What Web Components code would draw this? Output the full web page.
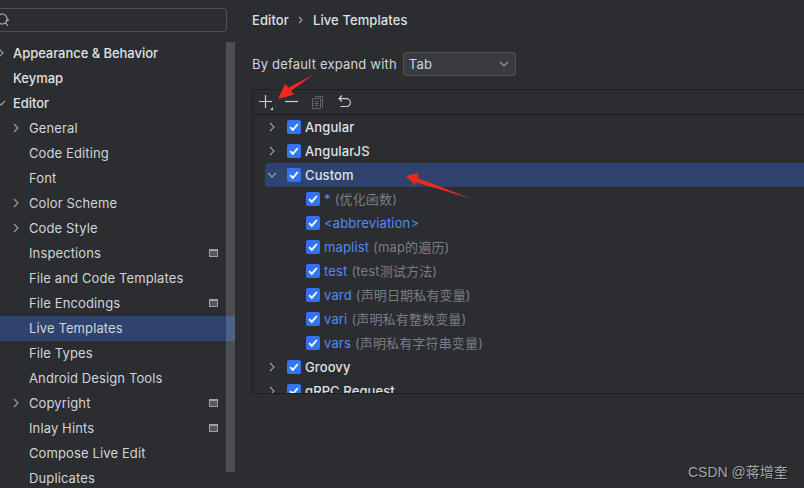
<!DOCTYPE html>
<html><head><meta charset="utf-8"><style>
html,body{margin:0;padding:0;background:#2b2d30;width:804px;height:488px;overflow:hidden}
body{font:13px Inter,"Noto Sans CJK SC",sans-serif;color:#dfe1e5}
</style></head><body>
<settings-app></settings-app>
<script>
const chev=(d)=>d?'<svg width="10" height="10" viewBox="0 0 10 10"><path d="M1 3l4 4 4-4" fill="none" stroke="#9da0a8" stroke-width="1.1"/></svg>':'<svg width="10" height="10" viewBox="0 0 10 10"><path d="M3 1l4 4-4 4" fill="none" stroke="#9da0a8" stroke-width="1.1"/></svg>';
class NavRow extends HTMLElement{connectedCallback(){
 const s=this.attachShadow({mode:'open'});
 const lvl=this.getAttribute('level')||'1',arrow=this.getAttribute('arrow'),badge=this.hasAttribute('badge');
 s.innerHTML=`<style>:host{display:flex;height:25px;align-items:center;position:relative;white-space:nowrap;padding-left:${lvl=='0'?13:29}px;letter-spacing:.12px;color:#d2d4d9}
 :host([top]){font-weight:500;color:#dfe1e5;letter-spacing:-.05px}
 :host([selected]){background:#2e436e}
 .a{position:absolute;left:${lvl=='0'?-4:11}px;top:7px;width:10px;height:10px;line-height:0}
 .b{margin-left:auto;margin-right:17px;width:9px;height:8px;box-sizing:border-box;border:1px solid #9da0a8;border-top-width:2px;background:#55575c;}</style>
 ${arrow?`<span class="a">${chev(arrow=='d')}</span>`:''}<slot></slot>${badge?'<span class="b"></span>':''}`;
}}
customElements.define('nav-row',NavRow);
class SideBar extends HTMLElement{connectedCallback(){
 const s=this.attachShadow({mode:'open'});
 s.innerHTML=`<style>:host{display:block;width:235px;height:488px;overflow:hidden;position:relative;flex:none}
 .search{margin:8px 8px 0 -10px;height:24px;border:1px solid #4e5157;border-radius:3px;box-sizing:border-box;display:flex;align-items:center;padding-left:7px}
 .tree{margin-top:8.5px}
 .sb{position:absolute;left:226px;top:42px;width:9px;height:430px;background:rgba(255,255,255,.16)}</style>
 <div class="search"><svg width="16" height="16" viewBox="0 0 16 16"><circle cx="4" cy="7" r="5" fill="none" stroke="#b4b6bc" stroke-width="1.1"/><path d="M7.500 10.500L10 14" stroke="#b4b6bc" stroke-width="1.1"/><path d="M8 7.500h3.500L9.800 9.500z" fill="#b4b6bc"/></svg></div>
 <div class="tree"><slot></slot></div><div class="sb"></div>`;
}}
customElements.define('side-bar',SideBar);
class CheckBox extends HTMLElement{connectedCallback(){
 this.attachShadow({mode:'open'}).innerHTML=`<style>:host{display:block;width:14px;height:14px;background:#3574f0;border-radius:2px;flex:none}svg{display:block}</style><svg width="14" height="14" viewBox="0 0 14 14"><path d="M3.200 7.200l2.600 2.700 5-5.800" fill="none" stroke="#fff" stroke-width="1.9"/></svg>`;
}}
customElements.define('check-box',CheckBox);
class TplRow extends HTMLElement{connectedCallback(){
 const s=this.attachShadow({mode:'open'});
 const arrow=this.getAttribute('arrow');
 s.innerHTML=`<style>:host{display:flex;height:24px;align-items:center;white-space:nowrap;padding-left:34px;position:relative;gap:4px;box-sizing:border-box;font-weight:500;letter-spacing:.1px;color:#dfe1e5}
 :host([child]){padding-left:53px;gap:4px;font-weight:400;letter-spacing:.15px;color:#548af7}
 :host([selected]){background:#2e436e;margin-left:12px;padding-left:22px;border-radius:4px 0 0 4px}
 .a{position:absolute;left:14px;top:7px;line-height:0}
 :host([selected]) .a{left:2px}
 .h{color:#7a7d85;margin-bottom:2px}
 </style>${arrow?`<span class="a">${chev(arrow=='d')}</span>`:''}<check-box></check-box><span><slot></slot></span><span class="h"><slot name="h"></slot></span>`;
}}
customElements.define('tpl-row',TplRow);
class TplPanel extends HTMLElement{connectedCallback(){
 const s=this.attachShadow({mode:'open'});
 s.innerHTML=`<style>:host{display:block;height:305px;margin-top:13px;border:1px solid #1e1f22;border-right:0;box-sizing:border-box;overflow:hidden}
 .bar{height:24px;border-bottom:1px solid #1e1f22;display:flex;align-items:center;padding-left:4px;gap:8px;box-sizing:content-box}
 .bar svg{display:block;flex:none}</style>
 <div class="bar">
 <svg width="18" height="18" viewBox="0 0 18 18"><path d="M8.500 2v13M2 8.500h13" stroke="#ced0d6" stroke-width="1.2"/><path d="M16 14v3h-3z" fill="#ced0d6"/></svg>
 <svg width="18" height="18" viewBox="0 0 18 18"><path d="M2 8.500h13" stroke="#ced0d6" stroke-width="1.2"/></svg>
 <svg width="18" height="18" viewBox="0 0 18 18"><path d="M6 3.500h7.500v11M3.500 5.500h8v10h-8z" fill="none" stroke="#63656b"/><path d="M5.500 8.500h4M5.500 10.500h4M5.500 12.500h4" stroke="#63656b"/></svg>
 <svg width="18" height="18" viewBox="0 0 18 18" style="margin-left:1px"><path d="M6 2.500L3 5.700l3 3M3.500 5.700h7a3.700 3.700 0 0 1 0 7.800H4.500" fill="none" stroke="#ced0d6" stroke-width="1.2"/></svg>
 </div><div class="list"><slot></slot></div>`;
}}
customElements.define('tpl-panel',TplPanel);
class MainPane extends HTMLElement{connectedCallback(){
 const s=this.attachShadow({mode:'open'});
 s.innerHTML=`<style>:host{display:block;flex:1;min-width:0;padding:0 0 0 17px}
 .crumb{height:17px;margin-top:11px;display:flex;align-items:center;gap:8px;font-weight:500;color:#dfe1e5;letter-spacing:.1px}
 .expand{display:flex;align-items:center;margin-top:24px;height:24px;letter-spacing:.19px;color:#d2d4d9}
 .sel{margin-left:6px;width:113px;height:24px;box-sizing:border-box;background:#393b40;border:1px solid #4e5157;border-radius:3px;display:flex;align-items:center;padding:0 6px 0 5px;justify-content:space-between;letter-spacing:.2px}</style>
 <div class="crumb"><span>Editor</span><svg width="8" height="10" viewBox="0 0 8 10"><path d="M2 2l3 3-3 3" fill="none" stroke="#9da0a8" stroke-width="1.1"/></svg><span>Live Templates</span></div>
 <div class="expand"><span>By default expand with</span><div class="sel"><span>Tab</span>${chev(true)}</div></div>
 <slot></slot>`;
}}
customElements.define('main-pane',MainPane);
class RedArrow extends HTMLElement{connectedCallback(){
 const s=this.attachShadow({mode:'open'});
 s.innerHTML=`<style>:host{display:block;position:absolute;left:0;top:0;width:804px;height:488px;pointer-events:none}svg{display:block}</style>
 <svg width="804" height="488"><path d="M313 75L291 91l3 3.500L278 99l7-15 3.500 3.500z" fill="#f0291f"/><path d="M406 176l12-3-.5 5L472 199l-57-17 1 4z" fill="#f0291f"/></svg>`;
}}
customElements.define('red-arrows',RedArrow);
class WaterMark extends HTMLElement{connectedCallback(){
 const s=this.attachShadow({mode:'open'});
 s.innerHTML=`<style>:host{position:absolute;left:688px;top:461px;font:14px "Liberation Sans","Noto Sans CJK SC",sans-serif;color:#a5a6a8;text-shadow:1px 1px 1px rgba(0,0,0,.5);white-space:nowrap}</style><slot></slot>`;
}}
customElements.define('water-mark',WaterMark);
class SettingsApp extends HTMLElement{connectedCallback(){
 const s=this.attachShadow({mode:'open'});
 s.innerHTML=`<style>:host{display:flex;width:804px;height:488px;position:relative;overflow:hidden}</style>
 <side-bar>
 <nav-row level="0" top arrow="r">Appearance &amp; Behavior</nav-row>
 <nav-row level="0" top>Keymap</nav-row>
 <nav-row level="0" top arrow="d">Editor</nav-row>
 <nav-row arrow="r">General</nav-row>
 <nav-row>Code Editing</nav-row>
 <nav-row>Font</nav-row>
 <nav-row arrow="r">Color Scheme</nav-row>
 <nav-row arrow="r">Code Style</nav-row>
 <nav-row badge>Inspections</nav-row>
 <nav-row>File and Code Templates</nav-row>
 <nav-row badge>File Encodings</nav-row>
 <nav-row selected>Live Templates</nav-row>
 <nav-row>File Types</nav-row>
 <nav-row>Android Design Tools</nav-row>
 <nav-row arrow="r" badge>Copyright</nav-row>
 <nav-row badge>Inlay Hints</nav-row>
 <nav-row>Compose Live Edit</nav-row>
 <nav-row>Duplicates</nav-row>
 </side-bar>
 <main-pane><tpl-panel>
 <tpl-row arrow="r">Angular</tpl-row>
 <tpl-row arrow="r">AngularJS</tpl-row>
 <tpl-row arrow="d" selected>Custom</tpl-row>
 <tpl-row child>*<span slot="h">(优化函数)</span></tpl-row>
 <tpl-row child>&lt;abbreviation&gt;</tpl-row>
 <tpl-row child>maplist<span slot="h">(map的遍历)</span></tpl-row>
 <tpl-row child>test<span slot="h">(test测试方法)</span></tpl-row>
 <tpl-row child>vard<span slot="h">(声明日期私有变量)</span></tpl-row>
 <tpl-row child>vari<span slot="h">(声明私有整数变量)</span></tpl-row>
 <tpl-row child>vars<span slot="h">(声明私有字符串变量)</span></tpl-row>
 <tpl-row arrow="r">Groovy</tpl-row>
 <tpl-row arrow="r">gRPC Request</tpl-row>
 </tpl-panel></main-pane>
 <red-arrows></red-arrows>
 <water-mark>CSDN @蒋增奎</water-mark>`;
}}
customElements.define('settings-app',SettingsApp);
</script></body></html>
